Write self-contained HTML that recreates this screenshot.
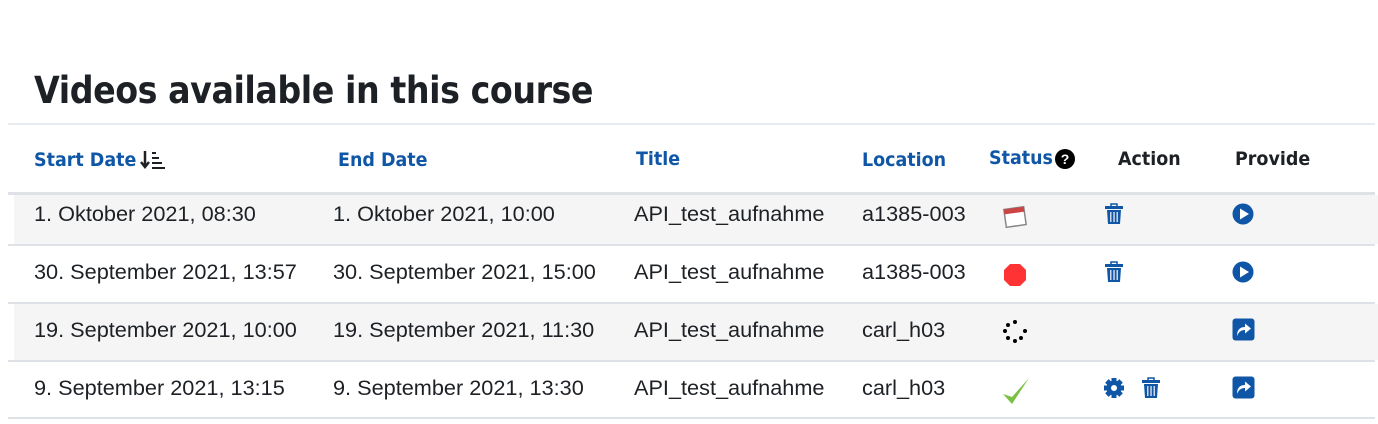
<!DOCTYPE html>
<html><head><style>
body{margin:0;width:1378px;height:424px;background:#fff;font-family:"Liberation Sans",Arial,sans-serif;position:relative;overflow:hidden}
h1{position:absolute;left:34px;top:69px;margin:0;font-size:37px;font-weight:bold;color:#1d2125;font-family:"DejaVu Sans","Liberation Sans",sans-serif;letter-spacing:-0.5px;transform:scaleX(0.9);transform-origin:left}
.line{position:absolute;left:8px;width:1367px;height:1px;background:#dee2e6}
.row{position:absolute;left:14px;width:1364px}
.t{position:absolute;font-size:21.7px;color:#1d2125;white-space:nowrap}
.h{position:absolute;font-size:19px;font-weight:bold;color:#0f56a6;white-space:nowrap;font-family:"DejaVu Sans","Liberation Sans",sans-serif;transform:scaleX(0.92);transform-origin:left}
.hk{color:#1d2125}
svg{position:absolute}
</style></head><body>
<h1>Videos available in this course</h1>
<div class="line" style="top:123px;height:2px;background:#e9ecef"></div>
<div class="h" style="left:34px;top:149px">Start Date</div>
<svg style="left:140px;top:149px" width="26" height="22"><path d="M5 2v15M1 13l4 5 4-5" stroke="#1d2125" stroke-width="2.5" fill="none"/><g fill="#1d2125"><rect x="12" y="3" width="4" height="2"/><rect x="12" y="8" width="7" height="2"/><rect x="12" y="13" width="10" height="2"/><rect x="12" y="18" width="13" height="2"/></g></svg>
<div class="h" style="left:338px;top:149px">End Date</div>
<div class="h" style="left:636px;top:148px">Title</div>
<div class="h" style="left:862px;top:149px">Location</div>
<div class="h" style="left:989px;top:147px">Status</div>
<svg style="left:1054px;top:148px" width="22" height="22"><circle cx="11" cy="11" r="10" fill="#000"/><text x="11" y="16" font-size="14" font-weight="bold" fill="#fff" text-anchor="middle" font-family="Liberation Sans">?</text></svg>
<div class="h hk" style="left:1118px;top:148px">Action</div>
<div class="h hk" style="left:1235px;top:148px">Provide</div>
<div class="line" style="top:192px;height:3px"></div>
<div class="row" style="top:195px;height:49px;background:#f5f5f5"></div>
<div class="line" style="top:244px;height:2px"></div>
<div class="line" style="top:302px;height:2px"></div>
<div class="row" style="top:304px;height:56px;background:#f5f5f5"></div>
<div class="line" style="top:360px;height:2px"></div>
<div class="line" style="top:417px;height:2px"></div>

<div class="t" style="left:34px;top:201px">1. Oktober 2021, 08:30</div>
<div class="t" style="left:333px;top:201px">1. Oktober 2021, 10:00</div>
<div class="t" style="left:634px;top:201px">API_test_aufnahme</div>
<div class="t" style="left:862px;top:201px">a1385-003</div>

<div class="t" style="left:34px;top:259px">30. September 2021, 13:57</div>
<div class="t" style="left:333px;top:259px">30. September 2021, 15:00</div>
<div class="t" style="left:634px;top:259px">API_test_aufnahme</div>
<div class="t" style="left:862px;top:259px">a1385-003</div>

<div class="t" style="left:34px;top:317px">19. September 2021, 10:00</div>
<div class="t" style="left:333px;top:317px">19. September 2021, 11:30</div>
<div class="t" style="left:634px;top:317px">API_test_aufnahme</div>
<div class="t" style="left:862px;top:317px">carl_h03</div>

<div class="t" style="left:34px;top:375px">9. September 2021, 13:15</div>
<div class="t" style="left:333px;top:375px">9. September 2021, 13:30</div>
<div class="t" style="left:634px;top:375px">API_test_aufnahme</div>
<div class="t" style="left:862px;top:375px">carl_h03</div>

<svg style="left:1002px;top:203px" width="26" height="26"><rect x="3" y="5" width="20" height="18" fill="#fff" stroke="#888" stroke-width="1.5" transform="rotate(-8 13 14)"/><rect x="3" y="5" width="20" height="5" fill="#c44" transform="rotate(-8 13 14)"/></svg>
<svg style="left:1002px;top:262px" width="26" height="26"><polygon points="8,2 18,2 24,8 24,18 18,24 8,24 2,18 2,8" fill="#f33"/></svg>
<svg style="left:1000px;top:318px" width="30" height="30" fill="#000"><circle cx="15" cy="4" r="2"/><circle cx="8" cy="7" r="2"/><circle cx="5" cy="13" r="2"/><circle cx="8" cy="20" r="2"/><circle cx="15" cy="23" r="2"/><circle cx="21" cy="20" r="2"/><circle cx="25" cy="13" r="2"/></svg>
<svg style="left:1001px;top:375px" width="30" height="30"><path d="M2 19 L11 29 L28 3 L11 22 Z" fill="#7ac142"/></svg>

<svg style="left:1104px;top:203px" width="20" height="22" fill="#0f56a6"><rect x="1" y="3" width="18" height="3"/><rect x="7" y="1" width="6" height="3" fill="none" stroke="#0f56a6" stroke-width="1.5"/><path d="M3 7h14l-1 14H4z"/><g fill="#cfd8ea"><rect x="6" y="9" width="1.5" height="10"/><rect x="9.3" y="9" width="1.5" height="10"/><rect x="12.5" y="9" width="1.5" height="10"/></g></svg>
<svg style="left:1104px;top:261px" width="20" height="22" fill="#0f56a6"><rect x="1" y="3" width="18" height="3"/><rect x="7" y="1" width="6" height="3" fill="none" stroke="#0f56a6" stroke-width="1.5"/><path d="M3 7h14l-1 14H4z"/><g fill="#cfd8ea"><rect x="6" y="9" width="1.5" height="10"/><rect x="9.3" y="9" width="1.5" height="10"/><rect x="12.5" y="9" width="1.5" height="10"/></g></svg>
<svg style="left:1141px;top:377px" width="20" height="22" fill="#0f56a6"><rect x="1" y="3" width="18" height="3"/><rect x="7" y="1" width="6" height="3" fill="none" stroke="#0f56a6" stroke-width="1.5"/><path d="M3 7h14l-1 14H4z"/><g fill="#cfd8ea"><rect x="6" y="9" width="1.5" height="10"/><rect x="9.3" y="9" width="1.5" height="10"/><rect x="12.5" y="9" width="1.5" height="10"/></g></svg>
<svg style="left:1103px;top:377px" width="22" height="22"><g fill="#0f56a6" transform="translate(11 11)"><circle r="7.5"/><g><rect x="-2.5" y="-10" width="5" height="20"/><rect x="-2.5" y="-10" width="5" height="20" transform="rotate(45)"/><rect x="-2.5" y="-10" width="5" height="20" transform="rotate(90)"/><rect x="-2.5" y="-10" width="5" height="20" transform="rotate(135)"/></g><circle r="3" fill="#fff"/></g></svg>

<svg style="left:1232px;top:203px" width="22" height="22"><circle cx="11" cy="11" r="10.5" fill="#0f56a6"/><path d="M8 5.5 L17 11 L8 16.5Z" fill="#fff"/></svg>
<svg style="left:1232px;top:261px" width="22" height="22"><circle cx="11" cy="11" r="10.5" fill="#0f56a6"/><path d="M8 5.5 L17 11 L8 16.5Z" fill="#fff"/></svg>
<svg style="left:1232px;top:318px" width="23" height="23"><rect x="0.5" y="0.5" width="22" height="22" rx="3" fill="#0f56a6"/><path d="M5 18 C5 11 9 9 13 9 V5.5 L19 10.5 L13 15.5 V12 C10 12 7 13 5 18Z" fill="#fff"/></svg>
<svg style="left:1232px;top:376px" width="23" height="23"><rect x="0.5" y="0.5" width="22" height="22" rx="3" fill="#0f56a6"/><path d="M5 18 C5 11 9 9 13 9 V5.5 L19 10.5 L13 15.5 V12 C10 12 7 13 5 18Z" fill="#fff"/></svg>
</body></html>
